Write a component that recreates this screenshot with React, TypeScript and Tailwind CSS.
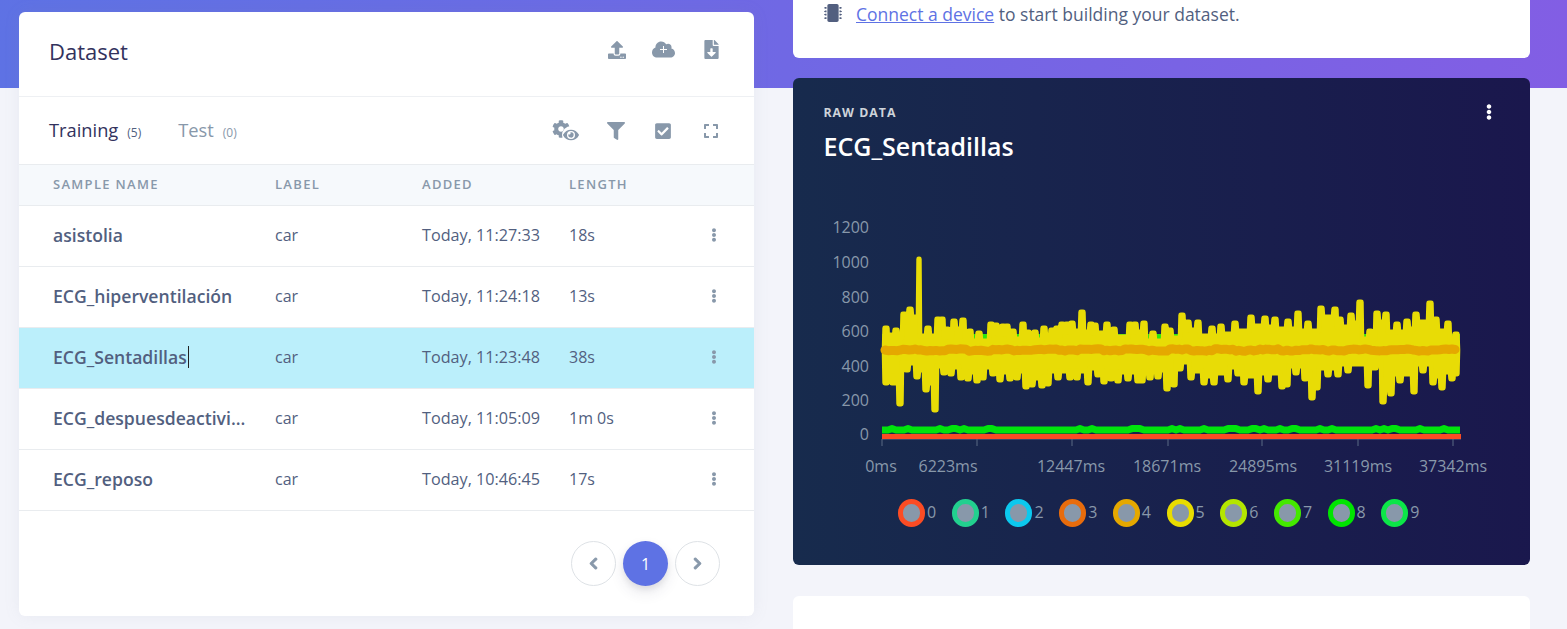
import React from "react";
import { FaUpload, FaCloud, FaFileDownload, FaCog, FaEye, FaFilter, FaCheckSquare, FaExpand, FaEllipsisV, FaMicrochip, FaChevronLeft, FaChevronRight } from "react-icons/fa";

const tops: [number, number][] = [[886,327],[890,334],[896,329],[904,313],[910,308],[919,258],[928,327],[938,318],[942,318],[947,328],[954,320],[963,319],[970,330],[979,332],[991,323],[996,324],[1003,325],[1007,325],[1013,330],[1023,323],[1028,331],[1035,331],[1044,327],[1052,329],[1057,327],[1062,323],[1067,323],[1072,322],[1082,311],[1091,323],[1095,324],[1107,323],[1114,328],[1130,323],[1135,323],[1144,322],[1153,332],[1165,325],[1170,329],[1182,314],[1188,321],[1198,321],[1212,327],[1221,325],[1235,322],[1251,316],[1265,317],[1275,318],[1288,320],[1298,312],[1308,322],[1321,307],[1335,308],[1340,318],[1351,314],[1360,301],[1370,330],[1377,312],[1386,313],[1397,323],[1407,320],[1416,313],[1430,302],[1436,318],[1448,322],[1456,333]];
const bottoms: [number, number][] = [[886,382],[893,382],[900,403],[907,369],[917,376],[926,389],[935,409],[944,372],[951,373],[961,377],[968,378],[977,380],[983,377],[993,373],[1000,379],[1010,378],[1017,377],[1026,386],[1032,384],[1042,385],[1048,383],[1058,377],[1070,377],[1077,377],[1088,382],[1098,374],[1104,381],[1111,378],[1118,380],[1128,378],[1138,380],[1142,380],[1150,377],[1158,376],[1167,388],[1174,384],[1180,368],[1191,377],[1204,382],[1214,382],[1228,379],[1238,373],[1244,382],[1258,391],[1268,379],[1282,386],[1287,384],[1296,372],[1305,378],[1312,397],[1317,387],[1328,374],[1338,374],[1348,370],[1368,385],[1375,367],[1383,401],[1391,393],[1400,380],[1414,391],[1423,370],[1433,382],[1442,387],[1452,378],[1456,373]];

function jitter(i: number, a: number) {
  return (Math.sin(i * 12.9898) * 43758.5453 % 1) * a;
}

function skyline(pts: [number, number][], upward: boolean) {
  let d = `M${pts[0][0] - 1} 349`;
  pts.forEach(([x, y], i) => {
    const prev = pts[i - 1];
    const next = pts[i + 1];
    const hw = y === 258 ? 0.2 : 1.2;
    const level = (o?: [number, number]) => {
      if (!o) return 349;
      return upward ? Math.min(343, Math.max(y, o[1]) + 8) : Math.max(359, Math.min(y, o[1]) - 7);
    };
    d += `L${x - hw - 0.6} ${level(prev)}L${x - hw} ${y}L${x + hw} ${y}L${x + hw + 0.6} ${level(next)}`;
  });
  return d + `L${pts[pts.length - 1][0] + 1} 349Z`;
}

const yellowPath = skyline(tops, true) + skyline(bottoms, false);

let orange = "M885 349";
for (let x = 888, i = 0; x <= 1457; x += 3, i++) orange += `L${x} ${349 + jitter(i + 3, 1.2)}`;

let green = "M882 429";
for (let x = 888, i = 0; x <= 1456; x += 4, i++) {
  green += `L${x} ${429 + (Math.abs(jitter(i + 11, 1)) > 0.8 ? -1.4 : 0)}`;
}
green += "L1460 429";

const xLabels: [string, number][] = [["0ms", 881], ["6223ms", 948], ["12447ms", 1071], ["18671ms", 1167], ["24895ms", 1263], ["31119ms", 1358], ["37342ms", 1453]];
const ticks = [882, 977, 1072, 1168, 1262, 1358, 1453];
const yLabels: [string, number][] = [["1200", 232], ["1000", 267], ["800", 302], ["600", 336], ["400", 371], ["200", 405], ["0", 439]];
const legend = ["#fb4c24", "#22d08f", "#0cc8ee", "#e86c0c", "#e5a800", "#e8dc00", "#b4e600", "#44e800", "#00e400", "#0ce648"];

const rows = [
  ["asistolia", "Today, 11:27:33", "18s"],
  ["ECG_hiperventilación", "Today, 11:24:18", "13s"],
  ["ECG_Sentadillas", "Today, 11:23:48", "38s"],
  ["ECG_despuesdeactivi...", "Today, 11:05:09", "1m 0s"],
  ["ECG_reposo", "Today, 10:46:45", "17s"],
];

function Row({ name, added, length, active }: { name: string; added: string; length: string; active: boolean }) {
  return (
    <div className={`flex h-[61px] items-center border-b border-[#e9ecef] pb-[2px] pl-[34px] ${active ? "bg-[#bbeffb]" : ""}`}>
      <div className="flex w-[222px] items-center text-[17.6px] font-[560] text-[#525f7f]">
        <span className="block whitespace-nowrap">{name}</span>
        {active && <span className="ml-px h-[22px] w-px bg-[#222]" />}
      </div>
      <div className="w-[147px] text-[16px] text-[#525f7f]">car</div>
      <div className="w-[147px] text-[16.2px] text-[#525f7f]">{added}</div>
      <div className="w-[120px] text-[16px] text-[#525f7f]">{length}</div>
      <FaEllipsisV className="ml-[18px] h-[14px] w-[14px] text-[#8898aa]" />
    </div>
  );
}

export default function App() {
  return (
    <div
      className="flex h-[629px] items-start gap-[39px] overflow-hidden bg-[#f3f4fa] bg-[linear-gradient(87deg,#5e72e4,#825ee4)] bg-[length:100%_88px] bg-no-repeat pl-[19px] text-[#525f7f]"
      style={{ fontFamily: '"Open Sans", sans-serif' }}
    >
      {/* Left card */}
      <div className="mt-[12px] h-[604px] w-[735px] shrink-0 rounded-[6px] bg-white shadow-[0_0_16px_rgba(136,152,170,0.1)]">
        <div className="flex h-[85px] items-start justify-between border-b border-[#eef0f3] pl-[30px] pr-[35px]">
          <h1 className="pt-[23px] text-[22px] font-[520] leading-[32px] text-[#32325d]">Dataset</h1>
          <div className="flex items-center pt-[26px] text-[#8898aa]">
            <FaUpload className="h-[18px] w-[18px]" />
            <span className="relative ml-[26px] block h-[23px] w-[23px]">
              <FaCloud className="h-[23px] w-[23px]" />
              <span className="absolute left-[8px] top-[10.5px] h-[1.5px] w-[7px] bg-white" />
              <span className="absolute left-[10.8px] top-[8px] h-[7px] w-[1.5px] bg-white" />
            </span>
            <FaFileDownload className="ml-[29px] h-[19px] w-[15px]" />
          </div>
        </div>
        <div className="flex h-[68px] items-center justify-between border-b border-[#e9ecef] pl-[30px] pr-[35px]">
          <div className="flex items-baseline pb-[2px]">
            <span className="text-[18.3px] font-medium text-[#32325d]">Training</span>
            <span className="ml-[9px] text-[12px] text-[#525f7f]">(5)</span>
            <span className="ml-[37px] text-[18.3px] font-medium text-[#8898aa]">Test</span>
            <span className="ml-[9px] text-[12px] text-[#8898aa]">(0)</span>
          </div>
          <div className="flex items-center text-[#8898aa]">
            <span className="relative block h-[22px] w-[28px]">
              <FaCog className="h-[18px] w-[18px]" />
              <FaEye className="absolute left-[10px] top-[6px] h-[18px] w-[18px] rounded-full bg-white px-px" />
            </span>
            <FaFilter className="ml-[27px] h-[18px] w-[18px]" />
            <FaCheckSquare className="ml-[29px] h-[18px] w-[18px]" />
            <FaExpand className="ml-[31px] h-[16px] w-[16px]" />
          </div>
        </div>
        <div className="flex h-[41px] items-center border-b border-[#e9ecef] bg-[#f6f9fc] pb-px pl-[34px] text-[13px] font-semibold uppercase tracking-[1.3px] text-[#8898aa]">
          <span className="w-[222px]">Sample name</span>
          <span className="w-[147px]">Label</span>
          <span className="w-[147px]">Added</span>
          <span>Length</span>
        </div>
        {rows.map((r, i) => (
          <Row key={r[0]} name={r[0]} added={r[1]} length={r[2]} active={i === 2} />
        ))}
        <div className="mt-[30px] flex items-center justify-end gap-[7px] pr-[34px]">
          <button className="flex h-[45px] w-[45px] items-center justify-center rounded-full border border-[#dee2e6] text-[#8898aa]">
            <FaChevronLeft className="h-[13px] w-[13px] stroke-[#8898aa] stroke-[40]" />
          </button>
          <button className="flex h-[45px] w-[45px] items-center justify-center rounded-full bg-[#5e72e4] text-[16px] text-white shadow-[0_7px_14px_rgba(50,50,93,0.1),0_3px_6px_rgba(0,0,0,0.08)]">
            1
          </button>
          <button className="flex h-[45px] w-[45px] items-center justify-center rounded-full border border-[#dee2e6] text-[#8898aa]">
            <FaChevronRight className="h-[13px] w-[13px] stroke-[#8898aa] stroke-[40]" />
          </button>
        </div>
      </div>

      {/* Right column */}
      <div className="flex w-[737px] shrink-0 flex-col">
        <div className="flex h-[58px] items-start gap-[14px] rounded-b-[6px] bg-white pl-[31px] pt-[3px]">
          <FaMicrochip className="mt-[1px] h-[18px] w-[18px] text-[#525f7f]" />
          <p className="text-[17.5px] leading-[22px]">
            <a className="text-[#5e72e4] underline">Connect a device</a> to start building your dataset.
          </p>
        </div>

        <div className="mt-[20px] h-[487px] rounded-[6px] bg-[linear-gradient(87deg,#172b4d,#1a174d)]">
          <div className="flex items-start justify-between pl-[30.5px] pr-[33px] pt-[26px]">
            <div>
              <div className="text-[12.3px] font-bold uppercase leading-[18px] tracking-[1px] text-[#ced4da]">Raw data</div>
              <div className="mt-[7px] text-[25px] font-semibold leading-[34px] text-white">ECG_Sentadillas</div>
            </div>
            <FaEllipsisV className="h-[16px] w-[16px] text-white" />
          </div>
          <svg viewBox="793 210 737 270" className="mt-[48px] block h-[270px] w-[737px]">
            <path d="M882 438H1461" stroke="#5b6a85" strokeWidth="1" />
            {ticks.map((t) => (
              <path key={t} d={`M${t} 438V445`} stroke="#5b6a85" strokeWidth="1" />
            ))}
            <rect x="882" y="333" width="578" height="14" fill="#2be80a" />
            <path d={yellowPath} stroke="#e8dc06" fill="#e8dc06" strokeWidth="5" strokeLinejoin="round" />
            <path d={orange} stroke="#e5a800" strokeWidth="9" strokeLinejoin="round" strokeLinecap="round" fill="none" />
            <path d={green} stroke="#00e40c" strokeWidth="7" strokeLinejoin="round" fill="none" />
            <path d="M882 435.5H1461" stroke="#fb4c24" strokeWidth="5" fill="none" />
            {yLabels.map(([t, y]) => (
              <text key={t} x="869" y={y} textAnchor="end" fontSize="16" fill="#8898aa">{t}</text>
            ))}
            {xLabels.map(([t, x]) => (
              <text key={t} x={x} y="471" textAnchor="middle" fontSize="16" fill="#8898aa">{t}</text>
            ))}
          </svg>
          <div className="mt-[18px] flex justify-center pl-[10px] text-[16px] leading-[22px] text-[#8898aa]">
            {legend.map((c, i) => (
              <div key={c} className="flex w-[53.7px] items-center">
                <span className="h-[28px] w-[27px] rounded-full border-[5px] bg-[#8898aa]" style={{ borderColor: c }} />
                <span className="ml-[2px] pb-[2px]">{i}</span>
              </div>
            ))}
          </div>
        </div>

        <div className="mt-[31px] h-[100px] rounded-t-[6px] bg-white" />
      </div>
    </div>
  );
}
